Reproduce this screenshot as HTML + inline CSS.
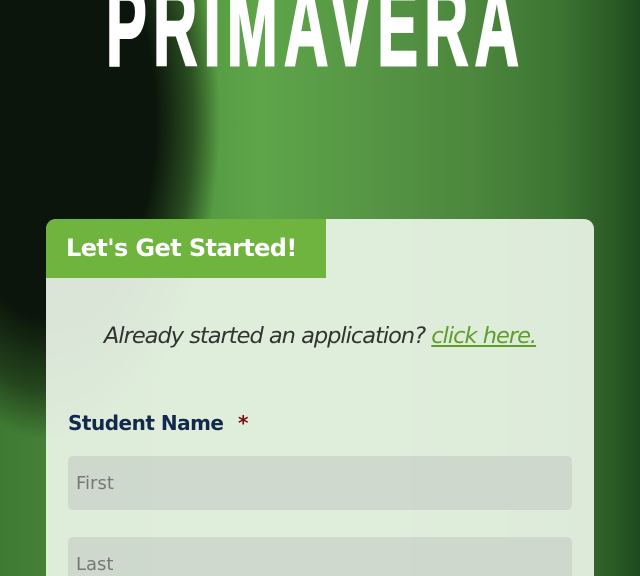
<!DOCTYPE html>
<html><head><meta charset="utf-8"><style>
html,body{margin:0;padding:0;width:640px;height:576px;overflow:hidden}
body{position:relative;font-family:"Liberation Sans",sans-serif;
background:linear-gradient(90deg,#3f7a33 0px,#559a42 200px,#5ea549 260px,#559444 380px,#4b863c 480px,#3c7432 560px,#2a5a25 615px,#1f4a1d 640px);}
.hair{position:absolute;left:-120px;top:-200px;width:340px;height:640px;background:radial-gradient(ellipse 170px 320px at 170px 320px,#0b150b 62%,rgba(15,30,12,.6) 84%,rgba(20,40,15,0) 100%)}
.title{position:absolute;left:106px;top:-30px;width:430px;font-weight:bold;font-size:114px;color:#fff;letter-spacing:12px;transform:scaleX(.535);transform-origin:left top;white-space:nowrap;line-height:1;font-family:"Liberation Sans Narrow","Liberation Sans",sans-serif;-webkit-text-stroke:3px #fff}
.card{position:absolute;left:46px;top:219px;width:548px;height:357px;background:rgba(232,242,228,.94);border-radius:10px 10px 0 0;overflow:hidden}
.tab{position:absolute;left:0;top:0;width:280px;height:59px;background:#6fb43f;color:#fff;font-weight:bold;font-size:24px;line-height:59px;padding-left:20px;box-sizing:border-box;font-family:"DejaVu Sans",sans-serif;letter-spacing:-.6px}
.already{position:absolute;left:0;width:548px;top:104px;text-align:center;font-style:italic;font-size:22.5px;color:#333;font-family:"DejaVu Sans",sans-serif;letter-spacing:-1px}
.already a{color:#5f9e2d;text-decoration:underline}
.label{position:absolute;left:22px;top:192px;font-weight:bold;font-size:20px;color:#13294b;font-family:"DejaVu Sans",sans-serif;letter-spacing:-.5px}
.label span{color:#7a0e0e;margin-left:8px}
.inp{position:absolute;left:22px;width:504px;height:54px;background:rgba(200,208,200,.7);border-radius:5px;color:#777;font-size:18px;line-height:56px;padding-left:8px;box-sizing:border-box;font-family:"DejaVu Sans",sans-serif}
</style></head><body>
<div class="hair"></div>
<div class="title">PRIMAVERA</div>
<div class="card">
<div class="tab">Let's Get Started!</div>
<div class="already">Already started an application? <a>click here.</a></div>
<div class="label">Student Name <span>*</span></div>
<div class="inp" style="top:237px">First</div>
<div class="inp" style="top:318px">Last</div>
</div>
</body></html>
